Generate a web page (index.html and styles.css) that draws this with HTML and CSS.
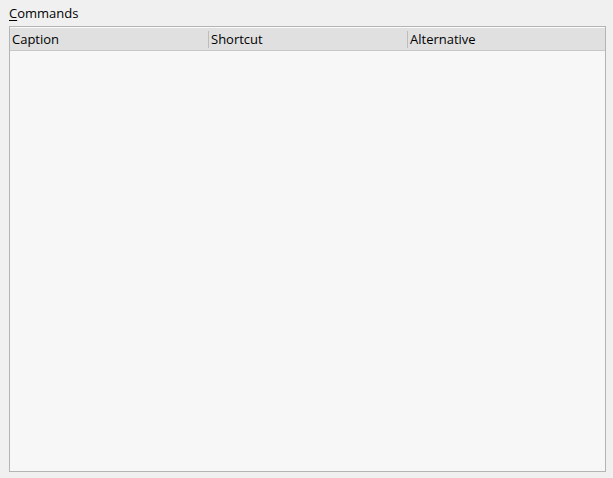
FILE: index.html
```html
<!DOCTYPE html>
<html>
<head>
<meta charset="utf-8">
<link rel="stylesheet" href="styles.css">
</head>
<body>
<div class="panel">
  <div class="label"><span class="ul">C</span>ommands</div>
  <div class="list">
    <div class="header">
      <div class="col col-caption">Caption</div>
      <div class="col col-shortcut">Shortcut</div>
      <div class="col col-alt">Alternative</div>
    </div>
    <div class="rows"></div>
  </div>
</div>
</body>
</html>
```
FILE: styles.css
```css
html, body {
  margin: 0;
  padding: 0;
  background: #f0f0f0;
}
body {
  width: 613px;
  height: 478px;
  overflow: hidden;
  font-family: "Open Sans", "Noto Sans", sans-serif;
  font-size: 13px;
  color: #000;
}
.panel {
  display: flex;
  flex-direction: column;
  padding: 4px 7px 0 9px;
}
.label {
  height: 22px;
  line-height: 18px;
}
.ul {
  text-decoration: underline;
  text-underline-offset: 2px;
}
.list {
  width: 595px;
  height: 444px;
  border: 1px solid #b4b4b4;
  background: #f7f7f7;
  display: flex;
  flex-direction: column;
}
.header {
  display: flex;
  height: 22px;
  border-top: 1px solid #fafafa;
  border-bottom: 1px solid #c8c8c8;
  background: #e0e0e0;
}
.col {
  position: relative;
  line-height: 22px;
  padding-left: 3px;
  box-sizing: border-box;
  white-space: nowrap;
}
.col-shortcut::before,
.col-alt::before {
  content: "";
  position: absolute;
  left: 0;
  top: 3px;
  bottom: 2px;
  width: 1px;
  background: #bdbdbd;
}
.col-caption {
  width: 198px;
  padding-left: 2px;
}
.col-shortcut {
  width: 199px;
}
.col-alt {
  flex: 1;
}
.rows {
  flex: 1;
}
```
